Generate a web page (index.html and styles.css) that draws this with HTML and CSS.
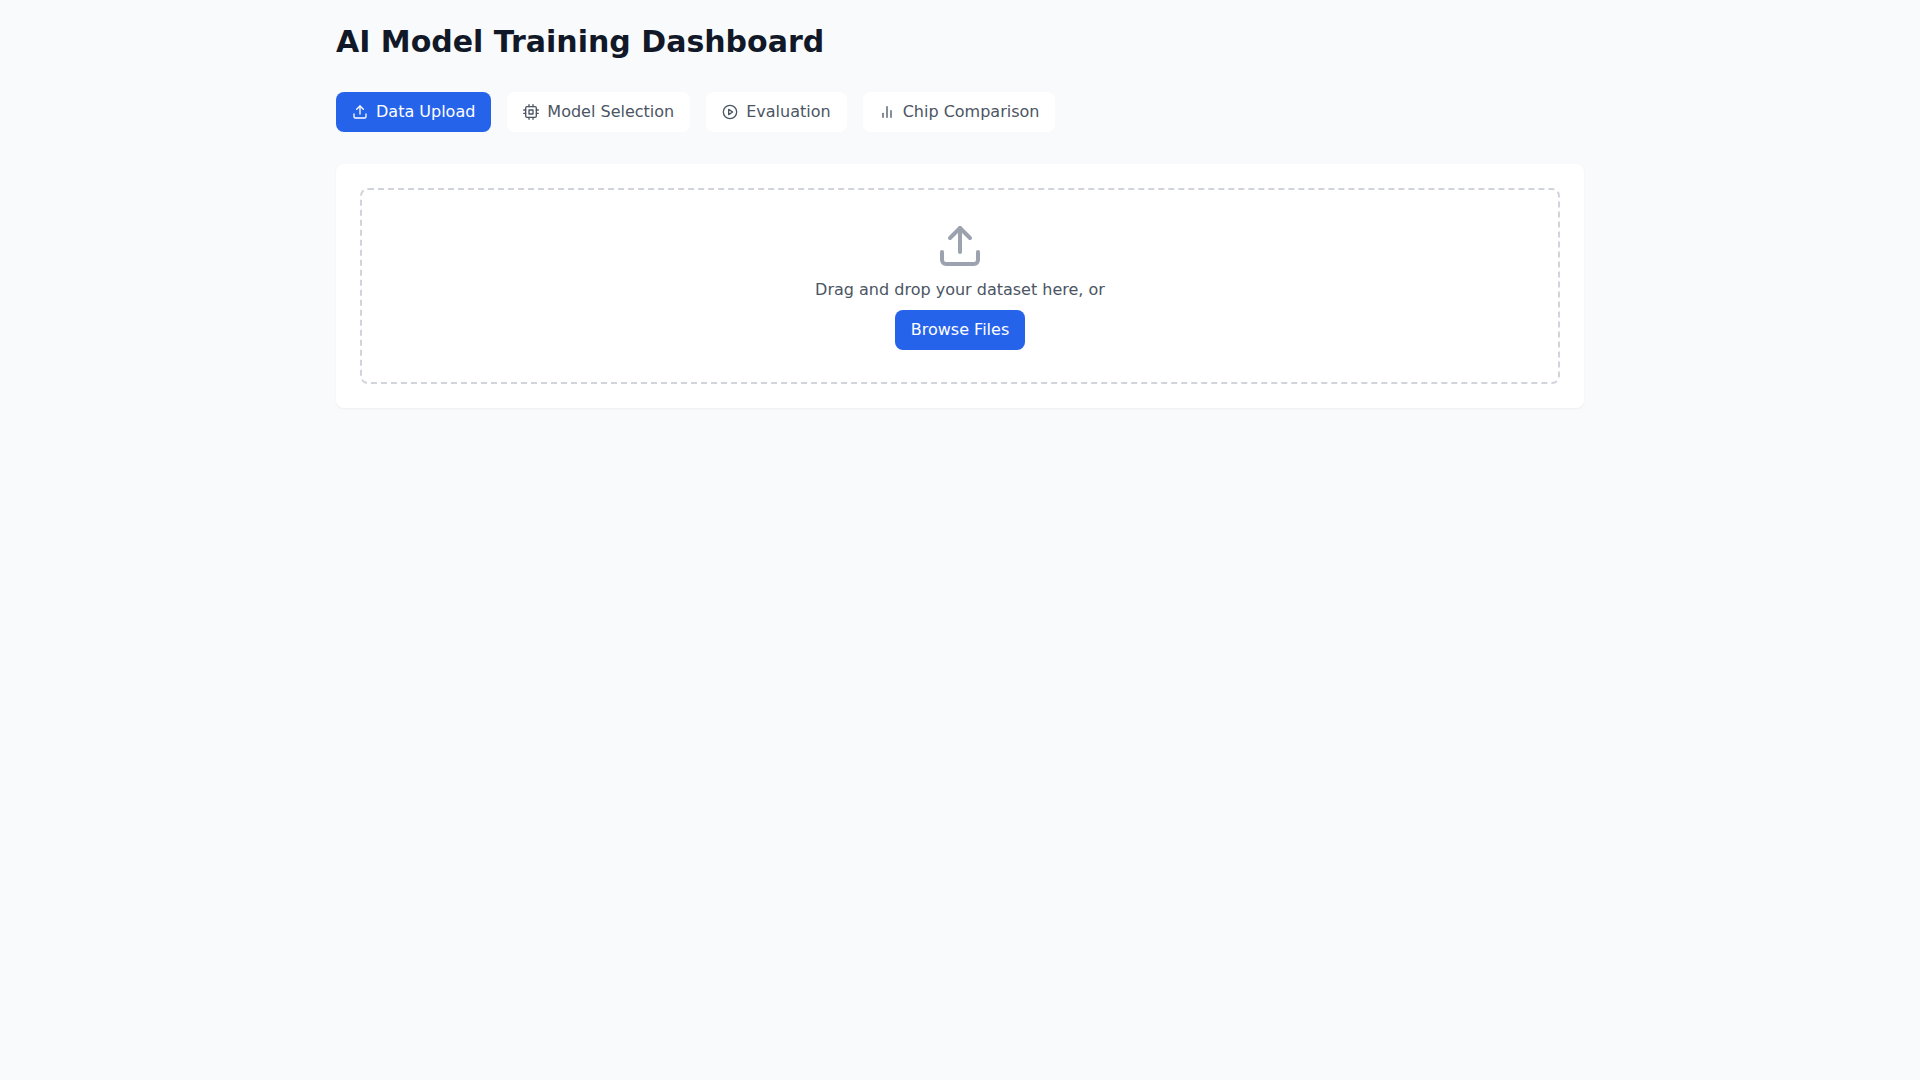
FILE: index.html
```html
<!DOCTYPE html>
<html lang="en">
<head>
<meta charset="utf-8">
<title>AI Model Training Dashboard</title>
<link rel="stylesheet" href="styles.css">
</head>
<body>
<main class="container">
  <h1 class="title">AI Model Training Dashboard</h1>
  <nav class="tabs">
    <button class="tab tab-active">
      <svg class="icon" viewBox="0 0 24 24"><path d="M21 15v4a2 2 0 0 1-2 2H5a2 2 0 0 1-2-2v-4"/><polyline points="17 8 12 3 7 8"/><line x1="12" y1="3" x2="12" y2="15"/></svg>
      Data Upload
    </button>
    <button class="tab">
      <svg class="icon" viewBox="0 0 24 24"><rect x="4" y="4" width="16" height="16" rx="2"/><rect x="9" y="9" width="6" height="6"/><line x1="9" y1="1" x2="9" y2="4"/><line x1="15" y1="1" x2="15" y2="4"/><line x1="9" y1="20" x2="9" y2="23"/><line x1="15" y1="20" x2="15" y2="23"/><line x1="20" y1="9" x2="23" y2="9"/><line x1="20" y1="14" x2="23" y2="14"/><line x1="1" y1="9" x2="4" y2="9"/><line x1="1" y1="14" x2="4" y2="14"/></svg>
      Model Selection
    </button>
    <button class="tab">
      <svg class="icon" viewBox="0 0 24 24"><circle cx="12" cy="12" r="10"/><polygon points="10 8 16 12 10 16 10 8"/></svg>
      Evaluation
    </button>
    <button class="tab">
      <svg class="icon" viewBox="0 0 24 24"><line x1="18" y1="20" x2="18" y2="10"/><line x1="12" y1="20" x2="12" y2="4"/><line x1="6" y1="20" x2="6" y2="14"/></svg>
      Chip Comparison
    </button>
  </nav>
  <section class="panel">
    <div class="dropzone">
      <svg class="icon-large" viewBox="0 0 24 24"><path d="M21 15v4a2 2 0 0 1-2 2H5a2 2 0 0 1-2-2v-4"/><polyline points="17 8 12 3 7 8"/><line x1="12" y1="3" x2="12" y2="15"/></svg>
      <p class="drop-text">Drag and drop your dataset here, or</p>
      <button class="browse">Browse Files</button>
    </div>
  </section>
</main>
</body>
</html>
```

FILE: styles.css
```css
* {
  box-sizing: border-box;
}

html,
body {
  margin: 0;
  padding: 0;
}

body {
  min-height: 100vh;
  background: #f9fafb;
  color: #111827;
  font-family: "DejaVu Sans", sans-serif;
  font-size: 16px;
  line-height: 24px;
}

.container {
  width: 1280px;
  margin: 0 auto;
  padding: 24px 16px;
}

.title {
  margin: 0 0 32px;
  font-size: 30px;
  line-height: 36px;
  font-weight: 700;
  color: #111827;
}

.tabs {
  display: flex;
  gap: 16px;
  margin-bottom: 32px;
}

.tab,
.browse {
  border: 0;
  border-radius: 8px;
  font: inherit;
  cursor: pointer;
}

.tab {
  display: flex;
  align-items: center;
  gap: 8px;
  padding: 8px 16px;
  background: #ffffff;
  color: #4b5563;
}

.tab-active {
  background: #2563eb;
  color: #ffffff;
}

.icon,
.icon-large {
  fill: none;
  stroke: currentColor;
  stroke-width: 2;
  stroke-linecap: round;
  stroke-linejoin: round;
  flex: none;
}

.icon {
  width: 16px;
  height: 16px;
}

.icon-large {
  display: block;
  width: 48px;
  height: 48px;
  color: #9ca3af;
}

.panel {
  padding: 24px;
  background: #ffffff;
  border-radius: 8px;
  box-shadow: 0 1px 2px 0 rgba(0, 0, 0, 0.05);
}

.dropzone {
  display: flex;
  flex-direction: column;
  align-items: center;
  padding: 32px;
  border: 2px dashed #d1d5db;
  border-radius: 8px;
}

.drop-text {
  margin: 8px 0;
  color: #4b5563;
}

.browse {
  padding: 8px 16px;
  background: #2563eb;
  color: #ffffff;
}
```
